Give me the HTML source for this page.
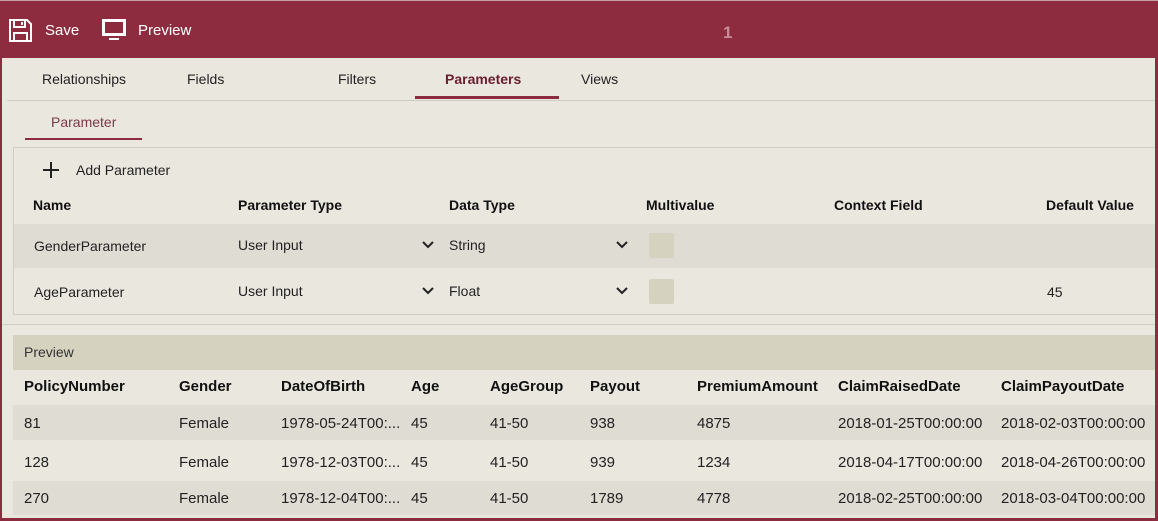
<!DOCTYPE html>
<html><head><style>
*{margin:0;padding:0;box-sizing:border-box}
body{width:1158px;height:521px;overflow:hidden;background:#8e2c3f;font-family:"Liberation Sans",sans-serif;font-size:14px;color:#222;position:relative}
.a{position:absolute;white-space:nowrap}
.b{font-weight:bold;color:#111}
#main{position:absolute;left:2px;top:58px;width:1153px;height:460px;background:#eae7df;overflow:hidden}
</style></head><body>
<div class="a" style="left:0;top:0;width:1158px;height:1px;background:#c9a0a8"></div>
<svg class="a" style="left:9px;top:19px" width="23" height="23" viewBox="0 0 23 23" fill="none" stroke="#fff" stroke-width="2"><path d="M1 1h17l4 4v17H1z"/><path d="M5 1v7h11V1"/><path d="M5 22v-8h13v8"/><path d="M13 3v3"/></svg>
<div class="a" style="left:45px;top:22px;color:#fff;font-size:15px">Save</div>
<svg class="a" style="left:102px;top:19px" width="24" height="22" viewBox="0 0 24 22" fill="none" stroke="#fff" stroke-width="3"><rect x="1.5" y="1.5" width="21" height="14"/><path d="M7 20h10" stroke-width="2"/></svg>
<div class="a" style="left:138px;top:22px;color:#fff;font-size:15px">Preview</div>
<div class="a" style="left:723px;top:23px;color:#c88a96;font-size:17px;font-weight:bold">1</div>
<div id="main">
<div class="a" style="left:5px;top:42px;width:1150px;height:1px;background:#cfccc5"></div>
<div class="a" style="left:40px;top:13px">Relationships</div>
<div class="a" style="left:185px;top:13px">Fields</div>
<div class="a" style="left:336px;top:13px">Filters</div>
<div class="a b" style="left:443px;top:13px;color:#6a2030">Parameters</div>
<div class="a" style="left:413px;top:38px;width:144px;height:3px;background:#8e2c3f"></div>
<div class="a" style="left:579px;top:13px">Views</div>
<div class="a" style="left:49px;top:56px;color:#7a3a48">Parameter</div>
<div class="a" style="left:23px;top:80px;width:117px;height:2px;background:#8e2c3f"></div>
<div class="a" style="left:11px;top:89px;width:1150px;height:168px;border:1px solid #d0cdc6;border-right:none"></div>
<svg class="a" style="left:41px;top:104px" width="16" height="16" viewBox="0 0 16 16" stroke="#222" stroke-width="2"><path d="M8 0v16M0 8h16"/></svg>
<div class="a" style="left:74px;top:104px">Add Parameter</div>
<div class="a b" style="left:31px;top:139px">Name</div>
<div class="a b" style="left:236px;top:139px">Parameter Type</div>
<div class="a b" style="left:447px;top:139px">Data Type</div>
<div class="a b" style="left:644px;top:139px">Multivalue</div>
<div class="a b" style="left:832px;top:139px">Context Field</div>
<div class="a b" style="left:1044px;top:139px">Default Value</div>
<div class="a" style="left:12px;top:166px;width:1150px;height:44px;background:#dfdcd3"></div>
<div class="a" style="left:32px;top:180px">GenderParameter</div>
<div class="a" style="left:236px;top:179px">User Input</div>
<svg class="a" style="left:420px;top:183px" width="12" height="8" viewBox="0 0 12 8" fill="none" stroke="#222" stroke-width="2"><path d="M1 1l5 5 5-5"/></svg>
<div class="a" style="left:447px;top:179px">String</div>
<svg class="a" style="left:614px;top:183px" width="12" height="8" viewBox="0 0 12 8" fill="none" stroke="#222" stroke-width="2"><path d="M1 1l5 5 5-5"/></svg>
<div class="a" style="left:647px;top:175px;width:25px;height:25px;background:#d5d2c0;border-radius:2px"></div>
<div class="a" style="left:32px;top:226px">AgeParameter</div>
<div class="a" style="left:236px;top:225px">User Input</div>
<svg class="a" style="left:420px;top:229px" width="12" height="8" viewBox="0 0 12 8" fill="none" stroke="#222" stroke-width="2"><path d="M1 1l5 5 5-5"/></svg>
<div class="a" style="left:447px;top:225px">Float</div>
<svg class="a" style="left:614px;top:229px" width="12" height="8" viewBox="0 0 12 8" fill="none" stroke="#222" stroke-width="2"><path d="M1 1l5 5 5-5"/></svg>
<div class="a" style="left:647px;top:221px;width:25px;height:25px;background:#d5d2c0;border-radius:2px"></div>
<div class="a" style="left:1045px;top:226px">45</div>
<div class="a" style="left:0;top:266px;width:1153px;height:1px;background:#d0cdc6"></div>
<div class="a" style="left:11px;top:277px;width:1150px;height:35px;background:#d5d2c0"></div>
<div class="a" style="left:22px;top:286px;color:#333">Preview</div>
<div class="a" style="left:11px;top:347px;width:1150px;height:35px;background:#dfdcd3"></div>
<div class="a" style="left:11px;top:423px;width:1150px;height:34px;background:#dfdcd3"></div>
<div class="a b" style="left:22px;top:320px;font-size:15px">PolicyNumber</div>
<div class="a b" style="left:177px;top:320px;font-size:15px">Gender</div>
<div class="a b" style="left:279px;top:320px;font-size:15px">DateOfBirth</div>
<div class="a b" style="left:409px;top:320px;font-size:15px">Age</div>
<div class="a b" style="left:488px;top:320px;font-size:15px">AgeGroup</div>
<div class="a b" style="left:588px;top:320px;font-size:15px">Payout</div>
<div class="a b" style="left:695px;top:320px;font-size:15px">PremiumAmount</div>
<div class="a b" style="left:836px;top:320px;font-size:15px">ClaimRaisedDate</div>
<div class="a b" style="left:999px;top:320px;font-size:15px">ClaimPayoutDate</div>
<div class="a" style="left:22px;top:357px;font-size:15px">81</div><div class="a" style="left:177px;top:357px;font-size:15px">Female</div><div class="a" style="left:279px;top:357px;font-size:15px">1978-05-24T00:...</div><div class="a" style="left:409px;top:357px;font-size:15px">45</div><div class="a" style="left:488px;top:357px;font-size:15px">41-50</div><div class="a" style="left:588px;top:357px;font-size:15px">938</div><div class="a" style="left:695px;top:357px;font-size:15px">4875</div><div class="a" style="left:836px;top:357px;font-size:15px">2018-01-25T00:00:00</div><div class="a" style="left:999px;top:357px;font-size:15px">2018-02-03T00:00:00</div>
<div class="a" style="left:22px;top:396px;font-size:15px">128</div><div class="a" style="left:177px;top:396px;font-size:15px">Female</div><div class="a" style="left:279px;top:396px;font-size:15px">1978-12-03T00:...</div><div class="a" style="left:409px;top:396px;font-size:15px">45</div><div class="a" style="left:488px;top:396px;font-size:15px">41-50</div><div class="a" style="left:588px;top:396px;font-size:15px">939</div><div class="a" style="left:695px;top:396px;font-size:15px">1234</div><div class="a" style="left:836px;top:396px;font-size:15px">2018-04-17T00:00:00</div><div class="a" style="left:999px;top:396px;font-size:15px">2018-04-26T00:00:00</div>
<div class="a" style="left:22px;top:432px;font-size:15px">270</div><div class="a" style="left:177px;top:432px;font-size:15px">Female</div><div class="a" style="left:279px;top:432px;font-size:15px">1978-12-04T00:...</div><div class="a" style="left:409px;top:432px;font-size:15px">45</div><div class="a" style="left:488px;top:432px;font-size:15px">41-50</div><div class="a" style="left:588px;top:432px;font-size:15px">1789</div><div class="a" style="left:695px;top:432px;font-size:15px">4778</div><div class="a" style="left:836px;top:432px;font-size:15px">2018-02-25T00:00:00</div><div class="a" style="left:999px;top:432px;font-size:15px">2018-03-04T00:00:00</div>
</div>
</body></html>
